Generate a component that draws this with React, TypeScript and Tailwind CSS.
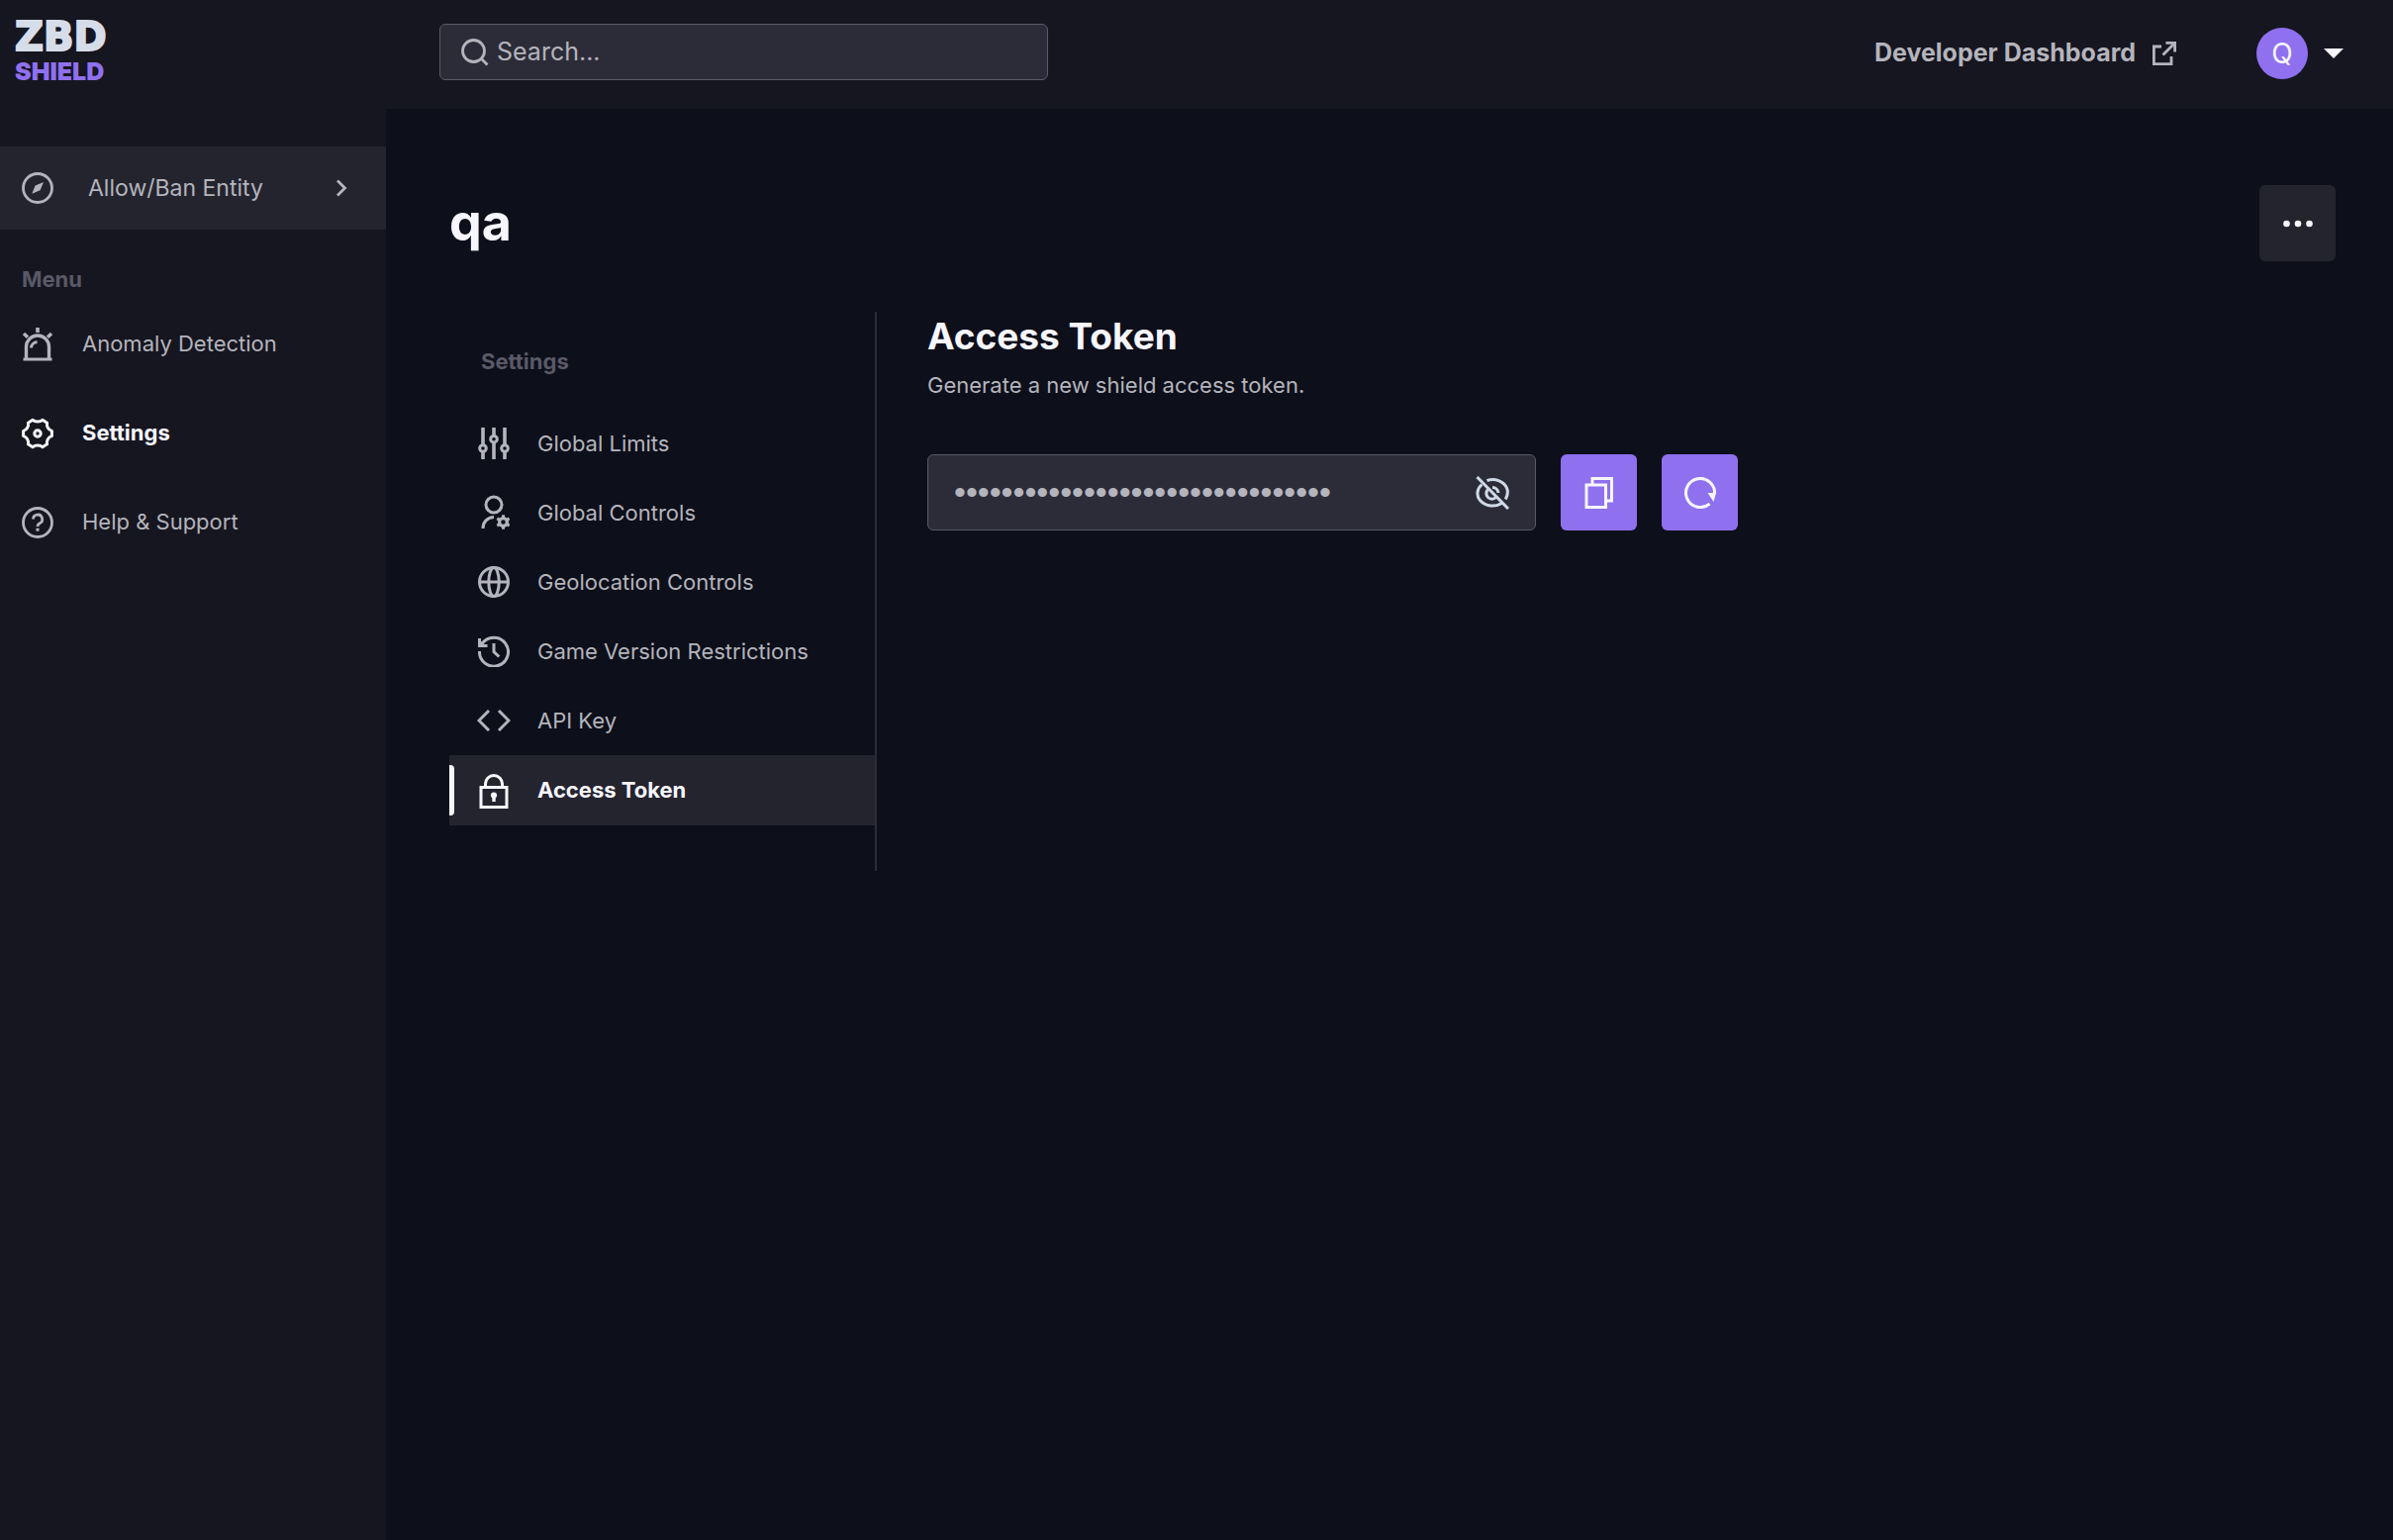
import React from "react";

type IconProps = { className?: string };

function Icon({ className = "size-8", children }: IconProps & { children: React.ReactNode }) {
  return (
    <svg viewBox="0 0 32 32" className={`${className} shrink-0`} fill="none" stroke="currentColor" strokeWidth={3} aria-hidden="true">
      {children}
    </svg>
  );
}

const CompassIcon = () => (
  <Icon>
    <circle cx="16" cy="16" r="14.5" strokeWidth="2.8" />
    <path d="M22 10 18.6 18.2 10.3 21.8 13.6 13.6Z" fill="currentColor" stroke="none" />
  </Icon>
);

const ChevronIcon = () => (
  <svg viewBox="0 0 12 18" className="h-[18px] w-3 shrink-0" fill="none" stroke="currentColor" strokeWidth={2.8} aria-hidden="true">
    <path d="M2 1.5 9.5 9 2 16.5" />
  </svg>
);

const SirenIcon = () => (
  <svg viewBox="0 0 32 34" className="h-[34px] w-8 shrink-0" fill="none" stroke="currentColor" strokeWidth={3} aria-hidden="true">
    <path d="M1.5 32H30.5" />
    <path d="M4.5 31V19.5a11.5 11.5 0 0 1 23 0V31" strokeWidth="3.4" />
    <path d="M9.5 20.5a6.5 6.5 0 0 1 6-6" />
    <path d="M16 0V5M2 6 6 9.7M30 6 26 9.7" strokeWidth="3.6" />
  </svg>
);

const GearIcon = () => (
  <Icon>
    <path
      d="M11.1 2.2C13.3 4.6 18.7 4.6 20.9 2.2L25.6 5.2C24.6 8.6 27 12.6 30.4 13.4V18.6C27 19.4 24.6 23.4 25.6 26.8L20.9 29.8C18.7 27.4 13.3 27.4 11.1 29.8L6.4 26.8C7.4 23.4 5 19.4 1.6 18.6V13.4C5 12.6 7.4 8.6 6.4 5.2Z"
      strokeLinejoin="round"
    />
    <circle cx="16" cy="16" r="3.2" />
  </Icon>
);

const HelpIcon = () => (
  <Icon>
    <circle cx="16" cy="16" r="14.5" strokeWidth="2.8" />
    <path d="M11.5 12.6a4.6 4.6 0 1 1 6.6 4.2c-1.6.8-2.1 1.4-2.1 3.2" strokeWidth="2.8" />
    <path d="M16 21.7V24.7" />
  </Icon>
);

const SlidersIcon = () => (
  <Icon>
    <path d="M5 0V17.5M5 25V32M16 0V8.5M16 15V32M27 0V17.5M27 25V32" strokeWidth="3.6" />
    <circle cx="5" cy="21" r="3.3" />
    <circle cx="16" cy="11.7" r="3.3" />
    <circle cx="27" cy="21" r="3.3" />
  </Icon>
);

const UserGearIcon = () => (
  <svg viewBox="0 0 32 36" className="h-9 w-8 shrink-0" fill="none" stroke="currentColor" strokeWidth={3} aria-hidden="true">
    <circle cx="16" cy="10" r="8" />
    <path d="M16 22.5A11 11 0 0 0 5 34" />
    <circle cx="25.5" cy="27.5" r="3.9" strokeWidth="3.2" />
    <path d="M25.5 20.3V23M25.5 32V34.7M19.3 23.9 21.6 25.2M29.4 29.8 31.7 31.1M19.3 31.1 21.6 29.8M29.4 25.2 31.7 23.9" />
  </svg>
);

const GlobeIcon = () => (
  <Icon>
    <circle cx="16" cy="16" r="14.5" />
    <ellipse cx="16" cy="16" rx="5.2" ry="14.5" />
    <path d="M1.5 16H30.5" />
  </Icon>
);

const HistoryIcon = () => (
  <Icon>
    <path d="M1.5 16A14.5 14.5 0 1 0 4 8.5" />
    <path d="M0 3V12H9.5Z" fill="currentColor" stroke="none" />
    <path d="M1.5 3V10.5H9.5" />
    <path d="M16 8V16.5L21.3 21.5" />
  </Icon>
);

const CodeIcon = () => (
  <svg viewBox="0 0 34 22" className="h-[22px] w-[34px] shrink-0" fill="none" stroke="currentColor" strokeWidth={3} aria-hidden="true">
    <path d="M12 1 2 11 12 21M22 1 32 11 22 21" />
  </svg>
);

const LockIcon = () => (
  <svg viewBox="0 0 32 36" className="h-9 w-8 shrink-0" fill="none" stroke="currentColor" strokeWidth={3} aria-hidden="true">
    <rect x="3" y="14.5" width="26" height="20" />
    <path d="M7.5 14V11a8.5 8.5 0 0 1 17 0V14" />
    <circle cx="16" cy="22.5" r="3.1" fill="currentColor" stroke="none" />
    <path d="M16 23V29" strokeWidth="3.4" />
  </svg>
);

const SearchIcon = () => (
  <svg viewBox="0 0 28 28" className="size-7 shrink-0" fill="none" stroke="currentColor" strokeWidth={2.8} aria-hidden="true">
    <circle cx="12.5" cy="12.5" r="11" />
    <path d="M20.5 20.5 26.5 26.5" />
  </svg>
);

const ExternalIcon = () => (
  <svg viewBox="0 0 26 26" className="size-[26px] shrink-0" fill="none" stroke="currentColor" strokeWidth={2.8} aria-hidden="true">
    <path d="M10 6H2.4V23.6H20V16" />
    <path d="M11.5 14.5 23 3" />
    <path d="M14.5 2.4H23.6V11.5" />
  </svg>
);

const EyeOffIcon = () => (
  <svg viewBox="0 0 34 34" className="size-[34px] shrink-0" fill="none" stroke="currentColor" strokeWidth={3} aria-hidden="true">
    <path d="M11.5 4.7C19 1.6 28.5 5 31.5 12C33 15.5 32.7 19 30.3 23.5" />
    <path d="M6.3 8.5C1.2 13 .5 20 4.5 24.5C10.5 31 20 31.5 26.5 27.5" />
    <path d="M17 11.5A6 6 0 0 1 23 17M12.5 13.5A5.5 5.5 0 1 0 20.5 21.5" />
    <path d="M1.5 1 33 33" />
  </svg>
);

const CopyIcon = () => (
  <svg viewBox="0 0 30 32" className="h-8 w-[30px] shrink-0" fill="none" stroke="currentColor" strokeWidth={3} aria-hidden="true">
    <rect x="2" y="8" width="19.5" height="22.5" />
    <path d="M8 7.5V1.5H27.5V24H22" />
  </svg>
);

const RefreshIcon = () => (
  <Icon>
    <path d="M25.5 27A14.5 14.5 0 1 1 30.5 17" />
    <path d="M23.5 16H32L29.5 25Z" fill="currentColor" stroke="none" />
  </Icon>
);

const MENU = [
  { label: "Anomaly Detection", icon: <SirenIcon /> },
  { label: "Settings", icon: <GearIcon />, active: true },
  { label: "Help & Support", icon: <HelpIcon /> },
];

const SETTINGS = [
  { label: "Global Limits", icon: <SlidersIcon /> },
  { label: "Global Controls", icon: <UserGearIcon /> },
  { label: "Geolocation Controls", icon: <GlobeIcon /> },
  { label: "Game Version Restrictions", icon: <HistoryIcon /> },
  { label: "API Key", icon: <CodeIcon /> },
];

function Header() {
  return (
    <header className="flex h-[110px] items-start bg-[#161620] text-[#b4b4bc]">
      <a href="#" aria-label="ZBD Shield" className="flex w-[390px] shrink-0 flex-col pl-[15px] pt-5">
        <span className="font-['DejaVu_Sans',sans-serif] text-[40px] font-bold leading-[34px] text-[#d6dde9] [-webkit-text-stroke:2px_#d6dde9]">ZBD</span>
        <span className="text-[25px] font-black leading-9 text-[#8f70ef]">SHIELD</span>
      </a>
      <label className="ml-[54px] mt-6 flex h-[57px] w-[615px] items-center gap-2 rounded-md border border-[#5a5967] bg-[#2c2c39] px-[21px]">
        <SearchIcon />
        <input type="search" aria-label="Search" placeholder="Search..." className="w-full bg-transparent text-[25px] outline-none placeholder:text-[#b4b4bc]" />
      </label>
      <div className="ml-auto mt-7 flex h-[52px] items-center pr-[50px]">
        <a href="#" className="flex items-center gap-4 text-[25px] font-bold">
          Developer Dashboard
          <ExternalIcon />
        </a>
        <button type="button" aria-label="Account menu" className="ml-20 flex items-center gap-4 text-[#f7f6ff]">
          <span className="flex size-[52px] items-center justify-center rounded-full bg-[#8f70ef] text-[28px]">Q</span>
          <svg viewBox="0 0 20 10" className="h-2.5 w-5" fill="currentColor" aria-hidden="true">
            <path d="M0 0H20L10 10Z" />
          </svg>
        </button>
      </div>
    </header>
  );
}

function Sidebar() {
  return (
    <aside className="w-[390px] shrink-0 bg-[#161620] pt-[38px] text-[22px] text-[#b4b4bc]">
      <a href="#" className="flex h-[84px] items-center bg-[#24242f] pl-[22px] pr-[39px]">
        <CompassIcon />
        <span className="ml-[35px] flex-1 text-[23px]">Allow/Ban Entity</span>
        <ChevronIcon />
      </a>
      <h2 className="mt-9 px-[22px] font-bold leading-7 text-[#5a5967]">Menu</h2>
      <nav aria-label="Main" className="mt-[7px] flex flex-col">
        {MENU.map((item) => (
          <a key={item.label} href="#" className={item.active ? "flex h-[90px] items-center gap-[29px] pl-[22px] font-bold text-[#f7f6ff]" : "flex h-[90px] items-center gap-[29px] pl-[22px]"}>
            {item.icon}
            <span className="pb-0.5">{item.label}</span>
          </a>
        ))}
      </nav>
    </aside>
  );
}

function SettingsNav() {
  return (
    <nav aria-label="Settings" className="w-[432px] shrink-0 border-r-2 border-[#2c2c39] pb-[46px] pt-9 text-[22px] text-[#b4b4bc]">
      <h2 className="pl-8 font-bold leading-7 text-[#5a5967]">Settings</h2>
      <div className="mt-[34px] flex flex-col">
        {SETTINGS.map((item) => (
          <a key={item.label} href="#" className="flex h-[70px] items-center gap-7 pl-[29px]">
            <span className="flex w-8 shrink-0 justify-center">{item.icon}</span>
            {item.label}
          </a>
        ))}
        <a href="#" aria-current="page" className="flex h-[71px] items-center bg-[#24242f] font-bold text-[#f7f6ff]">
          <span className="h-[51px] w-[5px] rounded-r bg-[#f7f6ff]" />
          <span className="ml-6 mr-7">
            <LockIcon />
          </span>
          Access Token
        </a>
      </div>
    </nav>
  );
}

export default function App() {
  return (
    <div className="flex min-h-screen flex-col bg-[#0d0f1a] font-['Inter',sans-serif]">
      <Header />
      <div className="flex flex-1">
        <Sidebar />
        <main className="min-w-0 flex-1 pl-16 pr-[58px] pt-[77px]">
          <div className="flex h-[77px] items-center justify-between">
            <h1 className="pb-0.5 text-[52px] font-bold leading-[60px] text-[#f7f6ff]">qa</h1>
            <button type="button" aria-label="More options" className="flex size-[77px] items-center justify-center rounded-md bg-[#24242f] text-[#f7f6ff]">
              <svg viewBox="0 0 30 8" className="h-2 w-[30px]" fill="currentColor" aria-hidden="true">
                <circle cx="3.5" cy="4" r="3.3" />
                <circle cx="15" cy="4" r="3.3" />
                <circle cx="26.5" cy="4" r="3.3" />
              </svg>
            </button>
          </div>
          <div className="mt-[51px] flex items-start">
            <SettingsNav />
            <section className="ml-[51px]">
              <h2 className="text-[37px] font-bold leading-[50px] text-[#f7f6ff]">Access Token</h2>
              <p className="mt-2 text-[22px] leading-8 text-[#b4b4bc]">Generate a new shield access token.</p>
              <div className="mt-[54px] flex gap-[25px]">
                <div className="flex h-[77px] w-[615px] items-center rounded-md border border-[#5a5967] bg-[#2c2c39] px-[26px]">
                  <input
                    type="password"
                    aria-label="Access token"
                    readOnly
                    defaultValue="00000000000000000000000000000000"
                    className="min-w-0 flex-1 bg-transparent font-['Liberation_Sans',sans-serif] text-[34px] text-[#b4b4bc] outline-none"
                  />
                  <button type="button" aria-label="Show token" className="text-[#d0d9e8]">
                    <EyeOffIcon />
                  </button>
                </div>
                <button type="button" aria-label="Copy token" className="flex size-[77px] items-center justify-center rounded-md bg-[#8f70ef] text-[#f7f6ff]">
                  <CopyIcon />
                </button>
                <button type="button" aria-label="Regenerate token" className="flex size-[77px] items-center justify-center rounded-md bg-[#8f70ef] text-[#f7f6ff]">
                  <RefreshIcon />
                </button>
              </div>
            </section>
          </div>
        </main>
      </div>
    </div>
  );
}
